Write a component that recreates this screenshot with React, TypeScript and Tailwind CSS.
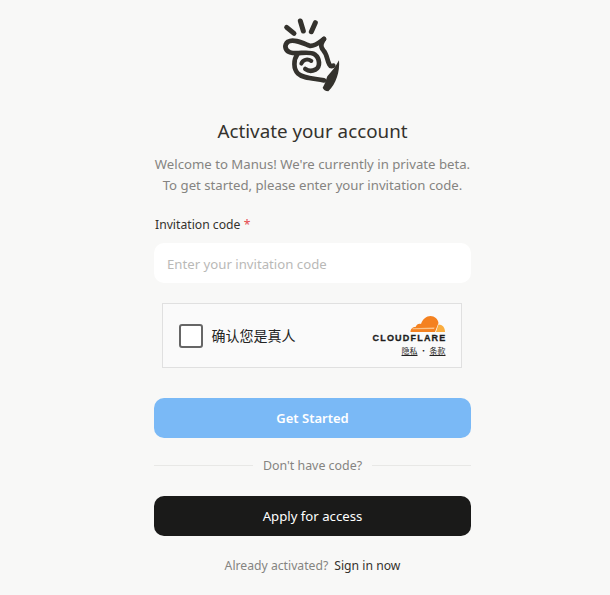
const Logo = () => (
  <svg viewBox="0 0 300 300" className="w-[100px] h-[100px] mr-[5px]" fill="none" stroke="#34322d" strokeWidth="14" strokeLinecap="round" strokeLinejoin="round">
    <path d="M80 79 L102 97" strokeWidth="15" />
    <path d="M121 60 L130 90" strokeWidth="15" />
    <path d="M166 65 L154 92" strokeWidth="15" />
    <path d="M192 114 C180 122 164 138 148 134 C128 126 100 112 84 122 C72 132 74 148 90 154 C110 162 146 148 164 160 C180 172 182 198 166 206 C154 212 144 210 136 204" />
    <path d="M124 188 C128 176 142 172 154 180" strokeWidth="12" />
    <path d="M112 160 C100 176 100 204 114 218 C128 232 160 232 192 238" />
    <path d="M192 114 C186 124 178 134 190 148 C202 160 200 176 208 190 C211 196 214 197 220 194" />
    <path d="M237 178 C240 212 228 250 205 271 C196 270 190 266 188 260 C196 248 198 236 202 226 C215 212 228 195 237 178 Z" fill="#34322d" stroke="none" />
  </svg>
);

const Cloud = () => (
  <svg viewBox="0 0 36 18" className="w-[37px] h-[18px]">
    <path d="M1 17 C1 14 3 12 6 12 C7 9 10 8 11.5 9 C13 4 17 1 21 1 C25 1 28.5 4 29 8 L25.5 17 Z" fill="#f48120" />
    <path d="M26.5 17 C27.5 13.5 28 12 29 9.5 C33 9.5 35.5 12.5 35.5 17 Z" fill="#faad3f" />
    <path d="M3 13.2 L25 12.6 L24.6 14 L3 14.2 Z" fill="#fbc48a" />
  </svg>
);

const Turnstile = () => (
  <div className="flex items-center justify-between w-[300px] h-[65px] bg-[#fafafa] border border-[#e0e0e0] pl-4 pr-[15px] mr-[2px]">
    <div className="flex items-center gap-[9px]">
      <div className="w-6 h-6 bg-white border-2 border-[#666666] rounded-[3px]" />
      <span className="text-[14px] text-[#232323] font-['Noto_Sans_CJK_SC',sans-serif]">确认您是真人</span>
    </div>
    <div className="flex flex-col items-end">
      <Cloud />
      <span className="text-[9px] leading-[10px] font-bold tracking-[1.2px] mr-[-1px] text-[#1d1d1d] [-webkit-text-stroke:0.3px_#1d1d1d] font-['Liberation_Sans',sans-serif]">CLOUDFLARE</span>
      <div className="flex items-center gap-[2px] mt-[3px] text-[8px] leading-[10px] text-[#232323] font-['Noto_Sans_CJK_SC',sans-serif]">
        <span className="underline">隐私</span>
        <span>•</span>
        <span className="underline">条款</span>
      </div>
    </div>
  </div>
);

export default function App() {
  return (
    <div className="h-[595px] overflow-hidden bg-[#f8f8f7] flex flex-col items-center pl-[15px] font-['Noto_Sans',sans-serif]">
      <div className="w-[317px] flex flex-col">
        <div className="flex justify-center h-[100px] mt-[1px]">
          <Logo />
        </div>
        <h1 className="text-center text-[18.8px] leading-[28px] mt-[16px] text-[#34322d]">Activate your account</h1>
        <p className="text-center text-[13.2px] leading-[21px] text-[#858481] mt-[9px] whitespace-nowrap">
          Welcome to Manus! We're currently in private beta.
          <br />
          To get started, please enter your invitation code.
        </p>
        <label className="text-[12.2px] leading-[18px] text-[#34322d] mt-[20px] pl-[1px]">
          Invitation code <span className="text-[#e5484d]">*</span>
        </label>
        <input
          className="h-10 mt-[9px] rounded-[10px] bg-white px-[13px] pt-[1px] text-[13.2px] outline-none placeholder:text-[#b9b9b7]"
          placeholder="Enter your invitation code"
        />
        <div className="flex justify-center mt-5">
          <Turnstile />
        </div>
        <button className="h-10 mt-[30px] pt-[1px] rounded-[10px] bg-[#7ab9f6] text-white text-[13px] font-semibold">Get Started</button>
        <div className="flex items-center gap-[10px] mt-[19px] h-[18px]">
          <div className="flex-1 h-px bg-[#e8e8e6] mb-[1px]" />
          <span className="text-[12.4px] text-[#858481]">Don't have code?</span>
          <div className="flex-1 h-px bg-[#e8e8e6] mb-[1px]" />
        </div>
        <button className="h-10 mt-[21px] pt-[1px] rounded-[10px] bg-[#1a1a19] text-white text-[13.2px]">Apply for access</button>
        <div className="flex justify-center gap-[6px] mt-[20px] text-[12.2px] leading-[20px]">
          <span className="text-[#858481]">Already activated?</span>
          <span className="text-[#34322d]">Sign in now</span>
        </div>
      </div>
    </div>
  );
}
